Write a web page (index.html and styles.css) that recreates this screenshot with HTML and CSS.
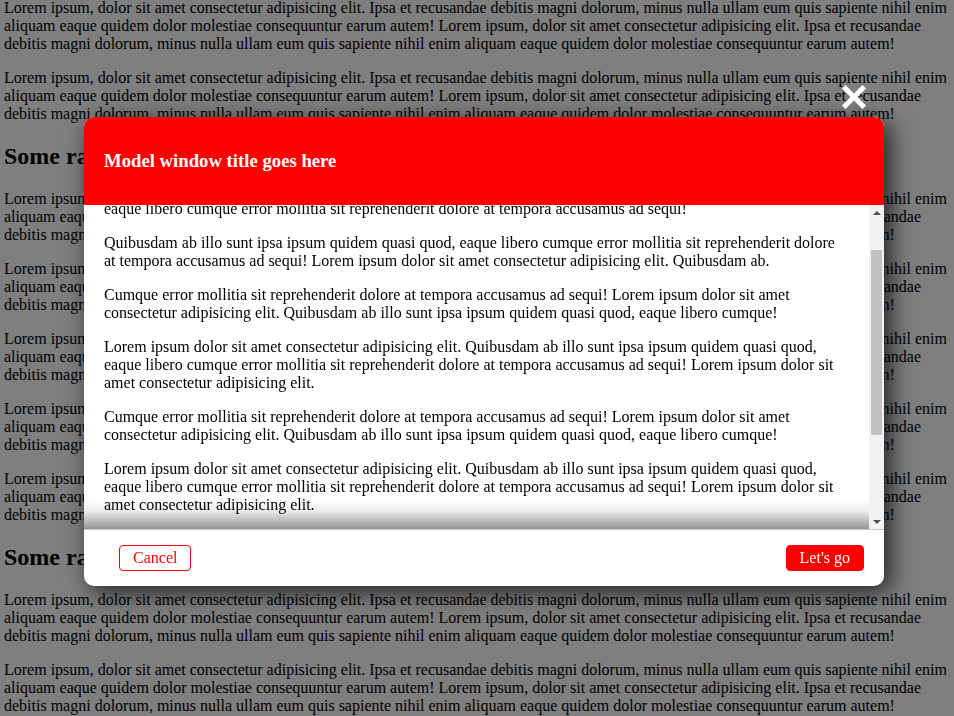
FILE: index.html
```html
<!DOCTYPE html>
<html>
<head>
<meta charset="utf-8">
<title>Modal</title>
<link rel="stylesheet" href="styles.css">
</head>
<body>
<main class="page">
  <p class="first">Lorem ipsum, dolor sit amet consectetur adipisicing elit. Ipsa et recusandae debitis magni dolorum, minus nulla ullam eum quis sapiente nihil enim aliquam eaque quidem dolor molestiae consequuntur earum autem! Lorem ipsum, dolor sit amet consectetur adipisicing elit. Ipsa et recusandae debitis magni dolorum, minus nulla ullam eum quis sapiente nihil enim aliquam eaque quidem dolor molestiae consequuntur earum autem!</p>
  <p>Lorem ipsum, dolor sit amet consectetur adipisicing elit. Ipsa et recusandae debitis magni dolorum, minus nulla ullam eum quis sapiente nihil enim aliquam eaque quidem dolor molestiae consequuntur earum autem! Lorem ipsum, dolor sit amet consectetur adipisicing elit. Ipsa et recusandae debitis magni dolorum, minus nulla ullam eum quis sapiente nihil enim aliquam eaque quidem dolor molestiae consequuntur earum autem!</p>
  <h2>Some random heading</h2>
  <p>Lorem ipsum, dolor sit amet consectetur adipisicing elit. Ipsa et recusandae debitis magni dolorum, minus nulla ullam eum quis sapiente nihil enim aliquam eaque quidem dolor molestiae consequuntur earum autem! Lorem ipsum, dolor sit amet consectetur adipisicing elit. Ipsa et recusandae debitis magni dolorum, minus nulla ullam eum quis sapiente nihil enim aliquam eaque quidem dolor molestiae consequuntur earum autem!</p>
  <p>Lorem ipsum, dolor sit amet consectetur adipisicing elit. Ipsa et recusandae debitis magni dolorum, minus nulla ullam eum quis sapiente nihil enim aliquam eaque quidem dolor molestiae consequuntur earum autem! Lorem ipsum, dolor sit amet consectetur adipisicing elit. Ipsa et recusandae debitis magni dolorum, minus nulla ullam eum quis sapiente nihil enim aliquam eaque quidem dolor molestiae consequuntur earum autem!</p>
  <p>Lorem ipsum, dolor sit amet consectetur adipisicing elit. Ipsa et recusandae debitis magni dolorum, minus nulla ullam eum quis sapiente nihil enim aliquam eaque quidem dolor molestiae consequuntur earum autem! Lorem ipsum, dolor sit amet consectetur adipisicing elit. Ipsa et recusandae debitis magni dolorum, minus nulla ullam eum quis sapiente nihil enim aliquam eaque quidem dolor molestiae consequuntur earum autem!</p>
  <p>Lorem ipsum, dolor sit amet consectetur adipisicing elit. Ipsa et recusandae debitis magni dolorum, minus nulla ullam eum quis sapiente nihil enim aliquam eaque quidem dolor molestiae consequuntur earum autem! Lorem ipsum, dolor sit amet consectetur adipisicing elit. Ipsa et recusandae debitis magni dolorum, minus nulla ullam eum quis sapiente nihil enim aliquam eaque quidem dolor molestiae consequuntur earum autem!</p>
  <p>Lorem ipsum, dolor sit amet consectetur adipisicing elit. Ipsa et recusandae debitis magni dolorum, minus nulla ullam eum quis sapiente nihil enim aliquam eaque quidem dolor molestiae consequuntur earum autem! Lorem ipsum, dolor sit amet consectetur adipisicing elit. Ipsa et recusandae debitis magni dolorum, minus nulla ullam eum quis sapiente nihil enim aliquam eaque quidem dolor molestiae consequuntur earum autem!</p>
  <h2>Some random heading</h2>
  <p>Lorem ipsum, dolor sit amet consectetur adipisicing elit. Ipsa et recusandae debitis magni dolorum, minus nulla ullam eum quis sapiente nihil enim aliquam eaque quidem dolor molestiae consequuntur earum autem! Lorem ipsum, dolor sit amet consectetur adipisicing elit. Ipsa et recusandae debitis magni dolorum, minus nulla ullam eum quis sapiente nihil enim aliquam eaque quidem dolor molestiae consequuntur earum autem!</p>
  <p>Lorem ipsum, dolor sit amet consectetur adipisicing elit. Ipsa et recusandae debitis magni dolorum, minus nulla ullam eum quis sapiente nihil enim aliquam eaque quidem dolor molestiae consequuntur earum autem! Lorem ipsum, dolor sit amet consectetur adipisicing elit. Ipsa et recusandae debitis magni dolorum, minus nulla ullam eum quis sapiente nihil enim aliquam eaque quidem dolor molestiae consequuntur earum autem!</p>
</main>

<div class="overlay"></div>

<section class="modal">
  <button class="modal-close" aria-label="Close">
    <svg width="24" height="24" viewBox="0 0 24 24"><path d="M3.5 3.5 L20.5 20.5 M20.5 3.5 L3.5 20.5" stroke="#fff" stroke-width="5" stroke-linecap="square" fill="none"/></svg>
  </button>
  <header class="modal-header">
    <h3 class="modal-title">Model window title goes here</h3>
  </header>
  <div class="modal-body">
    <div class="modal-content" id="modalContent">
      <p>Lorem ipsum dolor sit amet consectetur adipisicing elit. Quibusdam ab illo sunt ipsa ipsum quidem quasi quod, eaque libero cumque error mollitia sit reprehenderit dolore at tempora accusamus ad sequi!</p>
      <p>Quibusdam ab illo sunt ipsa ipsum quidem quasi quod, eaque libero cumque error mollitia sit reprehenderit dolore at tempora accusamus ad sequi! Lorem ipsum dolor sit amet consectetur adipisicing elit. Quibusdam ab.</p>
      <p>Cumque error mollitia sit reprehenderit dolore at tempora accusamus ad sequi! Lorem ipsum dolor sit amet consectetur adipisicing elit. Quibusdam ab illo sunt ipsa ipsum quidem quasi quod, eaque libero cumque!</p>
      <p>Lorem ipsum dolor sit amet consectetur adipisicing elit. Quibusdam ab illo sunt ipsa ipsum quidem quasi quod, eaque libero cumque error mollitia sit reprehenderit dolore at tempora accusamus ad sequi! Lorem ipsum dolor sit amet consectetur adipisicing elit.</p>
      <p>Cumque error mollitia sit reprehenderit dolore at tempora accusamus ad sequi! Lorem ipsum dolor sit amet consectetur adipisicing elit. Quibusdam ab illo sunt ipsa ipsum quidem quasi quod, eaque libero cumque!</p>
      <p>Lorem ipsum dolor sit amet consectetur adipisicing elit. Quibusdam ab illo sunt ipsa ipsum quidem quasi quod, eaque libero cumque error mollitia sit reprehenderit dolore at tempora accusamus ad sequi! Lorem ipsum dolor sit amet consectetur adipisicing elit.</p>
      <p>Quibusdam ab illo sunt ipsa ipsum quidem quasi quod, eaque libero cumque error mollitia sit reprehenderit dolore at tempora accusamus ad sequi! Lorem ipsum dolor sit amet consectetur adipisicing elit. Quibusdam ab.</p>
      <p>Cumque error mollitia sit reprehenderit dolore at tempora accusamus ad sequi! Lorem ipsum dolor sit amet consectetur adipisicing elit. Quibusdam ab illo sunt ipsa ipsum quidem quasi quod, eaque libero cumque!</p>
    </div>
    <div class="scrollbar" aria-hidden="true">
      <div class="scroll-btn"><span class="arrow-up"></span></div>
      <div class="scroll-track"><div class="scroll-thumb"></div></div>
      <div class="scroll-btn"><span class="arrow-down"></span></div>
    </div>
  </div>
  <div class="modal-fade"></div>
  <footer class="modal-footer">
    <button class="btn btn-outline">Cancel</button>
    <button class="btn btn-primary">Let's go</button>
  </footer>
</section>
<script src="script.js"></script>
</body>
</html>
```

FILE: styles.css
```css
html, body {
  margin: 0;
  padding: 0;
}
body {
  font-family: "Liberation Serif", "Times New Roman", serif;
  font-size: 16px;
  color: #000;
  background: #fff;
  overflow: hidden;
}
.page {
  padding: 0 4px;
}
.page p {
  margin: 16px 0;
}
.page p.first {
  margin-top: -1px;
}
.page h2 {
  font-size: 24px;
  margin: 20px 0;
}
.overlay {
  position: fixed;
  inset: 0;
  background: rgba(0, 0, 0, 0.5);
}
.modal {
  position: fixed;
  left: 84px;
  top: 117px;
  width: 800px;
  height: 469px;
  display: flex;
  flex-direction: column;
  background: #fff;
  border-radius: 10px;
  box-shadow: 6px 6px 24px rgba(0, 0, 0, 0.75);
}
.modal-close {
  position: absolute;
  top: -32px;
  right: 18px;
  width: 24px;
  height: 24px;
  padding: 0;
  border: 0;
  background: transparent;
  display: flex;
}
.modal-header {
  height: 88px;
  flex: none;
  display: flex;
  align-items: center;
  padding: 0 20px;
  background: #ff0000;
  border-radius: 10px 10px 0 0;
}
.modal-title {
  margin: 0;
  color: #fff;
  font-size: 18.72px;
  font-weight: bold;
}
.modal-body {
  height: 324px;
  flex: none;
  display: flex;
}
.modal-content {
  flex: 1;
  min-width: 0;
  overflow: hidden;
  padding: 20px;
}
.modal-content p {
  margin: 16px 0;
}
.scrollbar {
  width: 15px;
  flex: none;
  display: flex;
  flex-direction: column;
  background: #f1f1f1;
}
.scroll-btn {
  height: 15px;
  flex: none;
  display: flex;
  align-items: center;
  justify-content: center;
}
.arrow-up {
  width: 0;
  height: 0;
  border-left: 4px solid transparent;
  border-right: 4px solid transparent;
  border-bottom: 4px solid #505050;
}
.arrow-down {
  width: 0;
  height: 0;
  border-left: 4px solid transparent;
  border-right: 4px solid transparent;
  border-top: 4px solid #505050;
}
.scroll-track {
  flex: 1;
  padding: 30px 2px 0;
}
.scroll-thumb {
  height: 185px;
  background: #c1c1c1;
}
.modal-fade {
  position: absolute;
  left: 0;
  right: 15px;
  top: 382px;
  height: 30px;
  pointer-events: none;
  background: linear-gradient(to bottom, rgba(0, 0, 0, 0) 0%, rgba(0, 0, 0, 0.08) 40%, rgba(0, 0, 0, 0.42) 100%);
}
.modal-footer {
  flex: 1;
  display: flex;
  align-items: center;
  justify-content: space-between;
  padding: 0 20px 0 35px;
  border-top: 1px solid #c8c8c8;
}
.btn {
  font-family: "Liberation Serif", "Times New Roman", serif;
  font-size: 16px;
  line-height: 18px;
  padding: 3px 13px;
  border-radius: 4px;
  border: 1px solid #ff0000;
  cursor: pointer;
}
.btn-outline {
  background: #fff;
  color: #ff0000;
}
.btn-primary {
  background: #ff0000;
  color: #fff;
}
```

FILE: script.js
```js
document.getElementById('modalContent').scrollTop = 59;
```
